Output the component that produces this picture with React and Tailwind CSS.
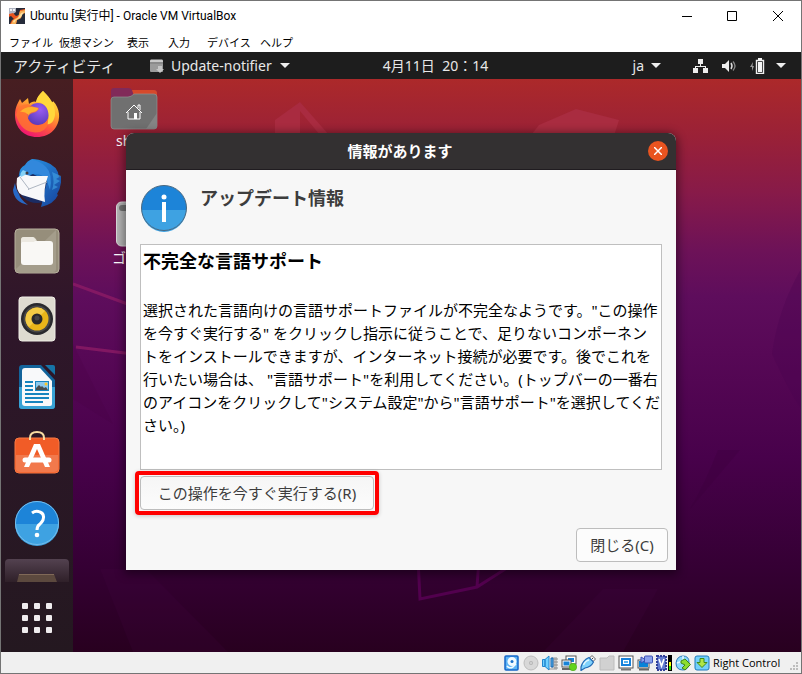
import React from 'react';

const MENU = [
  ['ファイル', 'w-[50px]'],
  ['仮想マシン', 'w-[68px]'],
  ['表示', 'w-[41px]'],
  ['入力', 'w-[39px]'],
  ['デバイス', 'w-[53px]'],
  ['ヘルプ', 'w-[40px]'],
];

function VirtualBoxIcon() {
  return (
    <svg width="16" height="16" viewBox="0 0 16 16" aria-hidden="true">
      <rect width="16" height="16" fill="#252b3a" />
      <path d="M0 0H7V4L4 6H0Z" fill="#aeb3c0" />
      <path d="M1 1H3V3H1ZM4 1H6V3H4Z" fill="#f2f2f5" />
      <path d="M0 6L4 5L7 8L10 7L11 2L16 1V5L13 6L12 10L8 12L7 16H1L3 12L5 11L2 8L0 9Z" fill="#e8541d" />
      <path d="M11 3L16 2V5L13 6L12 10L8 12L7 16H2L4 12L9 9Z" fill="#f6ad55" />
      <path d="M4 13L9 10L12 5L15 4L12 9L7 12L5 15Z" fill="#fde0a0" />
    </svg>
  );
}

function TitleBar() {
  return (
    <header className="flex h-[30px] items-center bg-white pl-2">
      <VirtualBoxIcon />
      <h1 className="ml-[5px] flex-1 whitespace-nowrap font-['Roboto','Noto_Sans_CJK_JP',sans-serif] text-[12px] leading-4 text-black">
        Ubuntu [実行中] - Oracle VM VirtualBox
      </h1>
      <button type="button" aria-label="最小化" className="flex h-[30px] w-[45px] items-center justify-center">
        <svg width="10" height="10" viewBox="0 0 10 10"><path d="M0 5.5H10" stroke="#000" /></svg>
      </button>
      <button type="button" aria-label="最大化" className="flex h-[30px] w-[45px] items-center justify-center">
        <svg width="10" height="10" viewBox="0 0 10 10"><path d="M.5 .5H9.5V9.5H.5Z" stroke="#000" fill="none" /></svg>
      </button>
      <button type="button" aria-label="閉じる" className="flex h-[30px] w-[47px] items-center justify-center">
        <svg width="10" height="10" viewBox="0 0 10 10"><path d="M0 0L10 10M10 0L0 10" stroke="#000" /></svg>
      </button>
    </header>
  );
}

function MenuBar() {
  return (
    <nav className="flex h-[21px] items-center bg-white pl-2 font-['Noto_Sans_CJK_JP',sans-serif] text-[11px] leading-4 text-black">
      {MENU.map(([label, width]) => (
        <button key={label} type="button" className={'whitespace-nowrap text-left ' + width}>{label}</button>
      ))}
    </nav>
  );
}

function Caret() {
  return <svg width="10" height="5" viewBox="0 0 10 5"><path d="M0 0H10L5 5Z" fill="#eee" /></svg>;
}

function TopBar() {
  return (
    <div className="flex h-[27px] items-center bg-[#1d1d1d] text-[15px] leading-5 text-[#e8e8e8]">
      <div className="flex flex-1 basis-0 items-center whitespace-nowrap pl-3">
        <button type="button" className="w-[105px] text-left">アクティビティ</button>
        <button type="button" className="ml-[31px] flex items-center text-[14px]">
          <svg width="16" height="14" viewBox="0 0 16 14" className="mr-[6px]">
            <path d="M1 2Q1 .5 2 .5H13Q14 .5 14 2V4H1Z" fill="#c9c9c9" />
            <path d="M1 3H14V12Q14 13 13 13H2Q1 13 1 12Z" fill="#9b9b9b" />
            <path d="M1 3H14V5H1Z" fill="#8a8a8a" />
            <path d="M9 7H13V10H15L11 14L7 10H9Z" fill="#c6c6c6" />
          </svg>
          <span className="mr-[8px]">Update-notifier</span>
          <Caret />
        </button>
      </div>
      <button type="button" className="whitespace-nowrap pl-[72px] text-[14px]">4月11日&nbsp; 20：14</button>
      <div className="flex flex-1 basis-0 items-center justify-end pr-[15px] text-[14px]">
        <button type="button" className="mr-8 flex items-center gap-[7px]">ja<Caret /></button>
        <button type="button" aria-label="システムメニュー" className="flex items-center">
          <svg width="16" height="14" viewBox="0 0 16 14" className="mr-[13px]">
            <path d="M5 0H10V5H8V7H13V9H15V14H10V9H12V8H3V9H5V14H0V9H2V7H7V5H5Z" fill="#eee" />
          </svg>
          <svg width="16" height="14" viewBox="0 0 16 14" className="mr-[12px]">
            <path d="M0 5H3L7 1V13L3 9H0Z" fill="#eee" />
            <path d="M9 4Q11 7 9 10" stroke="#ddd" strokeWidth="1.5" fill="none" />
            <path d="M11 2.500Q15 7 11 11.500" stroke="#888" strokeWidth="1.300" fill="none" />
          </svg>
          <svg width="15" height="16" viewBox="0 0 15 16" className="mr-[11px]">
            <path d="M3 4L0 9H2V13L4 8H2.500Z" fill="#999" />
            <path d="M6.500 2.500H13.500V15.500H6.500Z" fill="none" stroke="#eee" strokeWidth="1.400" />
            <path d="M8 0H12V2H8ZM8 4H12V14H8Z" fill="#f4f4f4" />
          </svg>
          <Caret />
        </button>
      </div>
    </div>
  );
}

function Firefox() {
  return (
    <svg width="48" height="48" viewBox="0 1 48 48">
      <defs>
        <linearGradient id="ff" x1=".8" y1="0" x2=".3" y2="1">
          <stop offset="0" stopColor="#fff14f" /><stop offset=".35" stopColor="#ffb02e" />
          <stop offset=".65" stopColor="#ff5a3c" /><stop offset="1" stopColor="#ee1274" />
        </linearGradient>
        <radialGradient id="ffp" cx=".6" cy=".3" r=".8">
          <stop offset="0" stopColor="#9a5cf2" /><stop offset="1" stopColor="#5137b4" />
        </radialGradient>
      </defs>
      <path d="M30 1C34 5 37 8 38 12C40 13 40 11 40 11C47 18 48 29 43 37C38 45 30 47 24 47C11 47 2 38 2 25C2 17 5 13 7 9L9 13L15 8L16 14C18 12 21 11 23 12C24 7 27 4 30 1Z" fill="url(#ff)" />
      <circle cx="25" cy="24" r="11" fill="url(#ffp)" />
      <path d="M30 1C34 6 43 12 42 25C41 33 36 35 34 34C37 27 36 18 30 14C27 12 25 12 23 12C24 7 27 4 30 1Z" fill="#ffd83c" />
      <path d="M3 25Q5 14 15 14Q20 17 26 18Q25 22 20 23Q15 24 15 29Q18 36 26 35Q33 34 35 29Q36 39 27 42Q9 45 3 25Z" fill="#ff752f" fillOpacity=".8" />
      <path d="M7 22Q13 15 25 18Q25 21 20 22Q16 23 16 25Q11 21 7 22Z" fill="#ffb02d" />
    </svg>
  );
}

function Thunderbird() {
  return (
    <svg width="48" height="48" viewBox="0 0 48 48">
      <defs>
        <linearGradient id="tb" x1="0" y1="0" x2="1" y2="1">
          <stop offset="0" stopColor="#2a9bea" /><stop offset="1" stopColor="#16419b" />
        </linearGradient>
      </defs>
      <circle cx="24" cy="24" r="20" fill="#1b2c63" />
      <path d="M0 31L2 24Q3 31 6 35Q7 40 15 46Q1 43 0 31Z" fill="#2768c5" />
      <path d="M19 0Q14 2 12 6Q4 10 7 21L20 15L34 22L29 44L28 48Q41 45 45 36L44 35Q49 27 48 17L46 18Q45 7 33 3Q25 0 19 0Z" fill="url(#tb)" />
      <path d="M18 1Q26 1 33 8Q40 15 37 31L34 22Q29 13 18 15L9 18Q8 8 18 1Z" fill="#3288dc" />
      <path d="M4 19L10 15L18 17L35 17Q30 30 32 43L9 36Q2 33 4 19Z" fill="#f8f8fa" />
      <path d="M7 18L16 30L34 23M16 30L15 31" fill="none" stroke="#adb5c1" strokeWidth="1" />
      <path d="M10 11L14 13L12 16L8 18Q6 15 10 11Z" fill="#86d2f6" />
      <circle cx="14" cy="14" r="1.500" fill="#423b40" />
      <path d="M39 13L48 17L43 20L47 22L41 26L45 28L39 31Q42 23 39 13Z" fill="#42a5e6" fillOpacity=".6" />
    </svg>
  );
}

function Files() {
  return (
    <svg width="48" height="48" viewBox="0 0 48 48">
      <rect x="2" y="2" width="44" height="44" rx="4" fill="#968e7b" stroke="#b7b09e" />
      <path d="M3 42L43 3V42Q43 45 40 45H6Q3 45 3 42Z" fill="#a49d8b" />
      <path d="M8 13Q8 10 11 10H20Q22 10 24 14H34V22H8Z" fill="#ddd8cd" />
      <rect x="8" y="14" width="32" height="24" rx="3" fill="#f9f8f5" />
      <path d="M8 13Q8 10 11 10H20L23 13L21 15H8Z" fill="#ece9e1" />
    </svg>
  );
}

function Rhythmbox() {
  return (
    <svg width="48" height="48" viewBox="0 0 48 48">
      <rect x="6" y="2" width="36" height="44" rx="3" fill="#dedbd0" stroke="#efede6" />
      <circle cx="24" cy="24" r="16" fill="#29292d" />
      <circle cx="24" cy="24" r="13.500" fill="#484849" />
      <circle cx="24" cy="24" r="11.500" fill="#e9b519" />
      <path d="M12.500 24A11.500 11.500 0 0 1 32 16L16 32A11 11 0 0 1 12.500 24Z" fill="#f4cc45" />
      <circle cx="24" cy="24" r="5.500" fill="#29292b" />
      <circle cx="24" cy="23" r="2.500" fill="#454547" />
    </svg>
  );
}

function Writer() {
  return (
    <svg width="48" height="48" viewBox="0 0 48 48">
      <path d="M9 2H28L42 17V43Q42 46 39 46H9Q6 46 6 43V5Q6 2 9 2Z" fill="#13649b" />
      <path d="M6 24H42V43Q42 46 39 46H9Q6 46 6 43Z" fill="#37a2d5" />
      <path d="M32 2H40Q42 2 42 4V12Z" fill="#1674a7" />
      <path d="M12 5H27L39 18V41Q39 43 37 43H12Q9 43 9 40V8Q9 5 12 5Z" fill="#f8f9fa" />
      <path d="M12 19H20M12 23H20M12 27H20M12 31H36M12 35H36M12 39H30" stroke="#1685bf" strokeWidth="2" />
      <rect x="22" y="18" width="14" height="10" fill="#1685bf" />
      <rect x="23" y="19" width="12" height="8" fill="#8cc8ed" />
      <circle cx="33" cy="21" r="1.500" fill="#fbc624" />
      <path d="M23 27V25L26 22L28 24L29 23L31 25L33 24L35 27Z" fill="#484c4d" />
    </svg>
  );
}

function Software() {
  return (
    <svg width="48" height="48" viewBox="0 0 48 48">
      <rect x="2" y="7" width="44" height="35" rx="4" fill="#f15c27" stroke="#f87944" />
      <path d="M3 24H45V38Q45 41 41 41H7Q3 41 3 38Z" fill="#f2794c" />
      <path d="M17 9V7Q17 1 24 1T31 7V9" fill="none" stroke="#f9dca2" strokeWidth="2" />
      <path d="M21 13H27L37 36H32L24 18L16 36H11Z" fill="#fff" />
      <path d="M12 29H36" stroke="#fff" strokeWidth="5" strokeLinecap="round" />
    </svg>
  );
}

function Help() {
  return (
    <svg width="48" height="48" viewBox="0 0 48 48">
      <circle cx="24" cy="24" r="22" fill="#1d84d8" />
      <path d="M2 25H46A22 22 0 0 1 2 25Z" fill="#3ea2e2" />
      <circle cx="24" cy="24" r="21.500" fill="none" stroke="#75bdeb" strokeWidth="1" />
      <path d="M19 14Q23 11 27 13Q32 15 30 21Q29 23 27 25Q24 27 24 31" fill="none" stroke="#fff" strokeWidth="3" />
      <circle cx="24" cy="36" r="2.300" fill="#fff" />
    </svg>
  );
}

function Dock() {
  const apps = [
    ['Firefox', Firefox], ['Thunderbird', Thunderbird], ['ファイル', Files], ['Rhythmbox', Rhythmbox],
    ['LibreOffice Writer', Writer], ['Ubuntu Software', Software], ['ヘルプ', Help],
  ];
  return (
    <aside className="flex w-[72px] shrink-0 flex-col items-center bg-linear-to-b from-[#471e21] via-[#2f162a] via-40% to-[#241820] pt-3">
      <div className="flex flex-col gap-5">
        {apps.map(([name, Icon]) => (
          <button key={name} type="button" aria-label={name} className="block size-12"><Icon /></button>
        ))}
      </div>
      <button type="button" aria-label="更新" className="mt-3 flex h-[23px] w-16 items-end justify-center overflow-hidden rounded-t bg-linear-to-b from-[#534250] to-[#2f2029]">
        <svg width="40" height="8" viewBox="0 0 40 8"><path d="M2 0H37Q38 3 40 8H0Z" fill="#5c493e" /><path d="M2 .5H37" stroke="#806958" /></svg>
      </button>
      <button type="button" aria-label="アプリケーションを表示する" className="mt-[21px] grid size-[30px] grid-cols-3 gap-[6px]">
        {Array.from({ length: 9 }, (_, i) => <span key={i} className="size-[6px] rounded-[1px] bg-[#efecee]" />)}
      </button>
    </aside>
  );
}

function Wallpaper() {
  return (
    <svg className="absolute inset-0 h-full w-full" viewBox="0 0 728 573" preserveAspectRatio="none" aria-hidden="true">
      <defs>
        <linearGradient id="sky" x1="0" y1="0" x2="0" y2="1">
          <stop offset="0" stopColor="#ac292a" />
          <stop offset=".1" stopColor="#9a2137" />
          <stop offset=".2" stopColor="#871a49" />
          <stop offset=".3" stopColor="#6d1258" />
          <stop offset=".38" stopColor="#5e0d5c" />
          <stop offset=".48" stopColor="#570856" />
          <stop offset=".66" stopColor="#48014b" />
          <stop offset=".85" stopColor="#350034" />
          <stop offset="1" stopColor="#28001f" />
        </linearGradient>
      </defs>
      <rect width="728" height="573" fill="url(#sky)" />
      <path d="M202 41L227 23V60H202Z" fill="#a92b40" />
      <path d="M227 23L256 56H247L227 32Z" fill="#a92b40" />
      <path d="M455 60L466 46L503 30L546 41L540 60Z" fill="#a92c40" />
      <path d="M0 205L60 227M3 268L60 275" stroke="#8c1c65" strokeWidth="3" strokeOpacity=".8" />
      <path d="M728 190Q705 230 699 275Q715 310 728 330Z" fill="#4a0450" fillOpacity=".3" />
      <path d="M645 371H667L617 430Q632 405 645 371Z" fill="#390039" fillOpacity=".25" />
      <path d="M0 265L40 345L0 320Z" fill="#40003f" fillOpacity=".15" />
      <path d="M27 490H73L155 573H60Z" fill="#49084a" fillOpacity=".15" />
      <path d="M530 510H585L550 573H470Z" fill="#49084a" fillOpacity=".15" />
      <path d="M345 480L347 520L404 508L445 482M406 480L404 508" fill="none" stroke="#52004e" strokeWidth="3" />
    </svg>
  );
}

function DesktopIcons() {
  return (
    <>
      <a href="#home" aria-label="ホーム" className="absolute left-[31px] top-2 w-[60px] text-[14px] leading-5 text-white">
        <svg width="60" height="44" viewBox="0 0 60 44">
          <path d="M7 4Q7 1 10 1H24Q27 1 28 3H50Q53 3 53 6V18H7Z" fill="#812a59" />
          <path d="M28 3H50Q53 3 53 6V15H32Z" fill="#d6492b" />
          <path d="M7 13Q7 10 10 10H24Q27 10 30 7H50Q53 7 53 10V39Q53 42 50 42H10Q7 42 7 39Z" fill="#707070" stroke="#919191" strokeWidth=".7" />
          <path d="M53 26V39Q53 42 50 42H42Z" fill="#848484" />
          <path d="M22 26L30 18L38 26M24 25V32H36V25M34 21V18H36V23" fill="none" stroke="#fff" />
          <path d="M30 26H33V32H30Z" fill="#fff" />
        </svg>
        <span className="ml-3 block">sh</span>
      </a>
      <a href="#trash" aria-label="ゴミ箱" className="absolute left-[39px] top-[122px] w-[60px] text-[14px] leading-5 text-white">
        <svg width="46" height="47" viewBox="0 0 46 47" className="ml-1">
          <rect x=".5" y="1" width="44" height="44" rx="5" fill="#b6b6b6" stroke="#d8d8d8" />
          <rect x="3" y="4" width="39" height="6" rx="3" fill="#747474" />
        </svg>
        <span className="block">ゴ</span>
      </a>
    </>
  );
}

function Dialog() {
  return (
    <section role="dialog" aria-labelledby="dlg-title" className="absolute left-[53px] top-[54px] w-[550px] overflow-visible rounded-t-lg bg-[#f7f7f7] shadow-[0_2px_10px_2px_rgba(0,0,0,0.45)]">
      <header className="flex h-[37px] items-center rounded-t-lg border-b border-[#201c20] bg-[#333031] pl-[26px] pr-2">
        <h2 id="dlg-title" className="flex-1 text-center text-[15px] font-bold leading-5 text-white">情報があります</h2>
        <button type="button" aria-label="閉じる" className="flex size-5 items-center justify-center rounded-full bg-[#e95420]">
          <svg width="8" height="8" viewBox="0 0 8 8"><path d="M0 0L8 8M8 0L0 8" stroke="#fff" strokeWidth="1.500" /></svg>
        </button>
      </header>
      <div className="px-[14px] pb-2 pt-[14px]">
        <div className="flex gap-3">
          <svg width="48" height="48" viewBox="0 0 48 48">
            <circle cx="24" cy="24" r="22.500" fill="#1d84d8" />
            <path d="M2 26H46A22 22 0 0 1 2 26Z" fill="#3ea2e2" />
            <circle cx="24" cy="24" r="22.500" fill="none" stroke="#4a6880" strokeWidth="1" />
            <circle cx="24" cy="13" r="2.500" fill="#fff" />
            <path d="M24 18V38" stroke="#fff" strokeWidth="4" />
          </svg>
          <h3 className="text-[18px] font-bold leading-7 text-[#3d3d3d]">アップデート情報</h3>
        </div>
        <div className="mt-3 h-[226px] w-[522px] border border-[#bfbfbf] bg-white pl-[2px] pt-[2px] text-black">
          <h4 className="text-[18px] font-bold leading-7">不完全な言語サポート</h4>
          <p className="mt-6 whitespace-nowrap text-[15px] leading-[23px]">
            選択された言語向けの言語サポートファイルが不完全なようです。"この操作<br />
            を今すぐ実行する" をクリックし指示に従うことで、足りないコンポーネン<br />
            トをインストールできますが、インターネット接続が必要です。後でこれを<br />
            行いたい場合は、 "言語サポート"を利用してください。(トップバーの一番右<br />
            のアイコンをクリックして"システム設定"から"言語サポート"を選択してくだ<br />
            さい。)
          </p>
        </div>
        <div className="relative mt-[6px] w-[234px]">
          <button type="button" className="block h-[34px] w-full whitespace-nowrap rounded border border-[#bdbdbd] bg-linear-to-b from-[#f6f6f6] to-[#fcfcfc] text-[15px] leading-5 text-[#3d3d3d]">この操作を今すぐ実行する(R)</button>
          <span aria-hidden="true" className="pointer-events-none absolute -inset-[5px] rounded border-4 border-[#ff0000] shadow-[0_1px_4px_rgba(0,0,0,0.2)]" />
        </div>
        <div className="-mr-[6px] mt-[18px] flex justify-end">
          <button type="button" className="h-[34px] w-[92px] whitespace-nowrap rounded border border-[#bdbdbd] bg-[#fcfcfc] text-[15px] leading-5 text-[#3d3d3d]">閉じる(C)</button>
        </div>
      </div>
    </section>
  );
}

const B = '#1c71c9';
const STATUS = [
  ['ハードディスク', <><rect x="1" y="1" width="13" height="14" rx="1" fill="#5db4f5" stroke="#1565c8" strokeWidth="1.500" /><circle cx="8" cy="6.500" r="4.500" fill="#f2faff" /><circle cx="8" cy="6.500" r="1.500" fill={B} /><path d="M3 11Q5 14 9 12L12 9" fill="none" stroke="#f2faff" strokeWidth="1.500" /></>],
  ['光学ドライブ', <><circle cx="8" cy="8" r="7" fill="#d8d8d8" stroke="#bdbdbd" /><circle cx="8" cy="8" r="2" fill="#b5b5b5" /><circle cx="8" cy="8" r=".8" fill="#eee" /></>],
  ['オーディオ', <><path d="M10 2H15V15H7V13H10Z" fill="#c2c2c2" /><path d="M12 4H16M12 7H16M12 10H16M12 13H16" stroke="#8c8c8c" /><path d="M.5 4.500H3V11.500H.5ZM3 4.500L7 1V15L3 11.500Z" fill="#70d0ff" stroke="#2185cf" /><path d="M9 3H11V12H9Z" fill="#58b4ee" stroke="#1565b0" /></>],
  ['ネットワーク', <><rect x="5" y="1" width="10" height="8" fill="#fff" stroke="#555" /><path d="M7 3H13V7H7Z" fill="#1683d8" /><rect x="1" y="5" width="9" height="7" fill="#fff" stroke="#555" /><path d="M2.500 6.500H8.500V10.500H2.500Z" fill="#1683d8" /><path d="M1 14H10" stroke="#666" strokeWidth="2" /><circle cx="12" cy="12" r="3.700" fill="#62d31c" stroke="#48a216" strokeWidth=".6" /></>],
  ['USB', <><path d="M9.500 3L12 .5L15.500 4L13 6.500Z" fill="#f6f6f6" stroke="#666" /><path d="M9 2.500L13.500 7Q11 12 5 13L1 15.500L1 12Q3 5 9 2.500Z" fill="#80d2fc" stroke="#236bb5" strokeWidth="1.200" /><path d="M3.500 10Q5 6 9 5" stroke="#e2f7ff" strokeWidth="1.500" fill="none" /><path d="M12 3H13V4H12Z" fill="#444" /></>],
  ['共有フォルダー', <path d="M1 3H8L10 1H15V15H1Z" fill="#d1d1d1" stroke="#bcbcbc" />],
  ['ディスプレイ', <><rect x="1" y="1" width="14" height="12" fill="#fff" stroke="#555" /><rect x="3" y="3" width="10" height="8" fill="#1782dc" /><rect x="5.500" y="5.500" width="5" height="3" fill="#58b4f0" stroke="#fff" /><path d="M3 14.500H13" stroke="#777" strokeWidth="2" /></>],
  ['録画', <><rect x="1" y="5" width="11" height="8" fill="#fff" stroke="#555" /><rect x="2" y="6" width="9" height="6" fill="#0883d8" /><path d="M2 14.500H12" stroke="#666" strokeWidth="2" /><rect x="7.500" y="1" width="8" height="7" rx="1" fill="#8aa1ec" stroke="#3c51b4" /><path d="M4 2L7.500 4V6L4 8Z" fill="#8aa1ec" stroke="#3c51b4" /></>],
  ['CPU', <><path d="M1 1H10V15H1Z" fill="#627bcf" stroke="#313f99" strokeWidth="2" strokeDasharray="2 1" /><path d="M3 4L5.500 11L8 4" fill="none" stroke="#fff" strokeWidth="1.600" /><path d="M12 0H16V16H12Z" fill="#000" /><path d="M13 7H15V11H13Z" fill="#ff0" /><path d="M13 11H15V15H13Z" fill="#25e000" /></>],
  ['マウス統合', <><path d="M1 8Q2 1 8 1Q14 1 14 7Q14 15 8 15Q1 15 1 8Z" fill="#8ad7fc" stroke="#2b79bb" /><path d="M8 1V6L2 8" fill="none" stroke="#e5f7ff" strokeWidth="1.500" /><path d="M6 6L10 4L15.500 9.500L10 15L7 13L10 10L6 8Z" fill="#8bdc30" stroke="#3b831c" /></>],
  ['キーボード', <><rect x="1" y="1" width="14" height="14" rx="2" fill="#74d0fb" stroke="#1e79bc" /><path d="M6 3.500H10V7.500H13L8 12.500L3 7.500H6Z" fill="#b0e647" stroke="#3f8a1c" /></>],
];

function StatusBar() {
  return (
    <footer className="flex h-[21px] items-center justify-end bg-[#f0f0f0]">
      <div className="flex gap-[3px]">
        {STATUS.map(([name, art]) => (
          <button key={name} type="button" aria-label={name} className="size-4">
            <svg width="16" height="16" viewBox="0 0 16 16">{art}</svg>
          </button>
        ))}
      </div>
      <span className="ml-[3px] w-[77px] whitespace-nowrap font-['Open_Sans',sans-serif] text-[11px] leading-4 text-black">Right Control</span>
      <svg width="11" height="11" viewBox="0 0 11 11" className="self-end" aria-hidden="true">
        <path d="M6 0H8V2H6ZM3 3H5V5H3ZM6 3H8V5H6ZM0 6H2V8H0ZM3 6H5V8H3ZM6 6H8V8H6Z" fill="#bdbdbd" />
      </svg>
    </footer>
  );
}

export default function App() {
  return (
    <div className="flex min-h-screen flex-col border border-[#747474] bg-[#f0f0f0] font-['Noto_Sans','Noto_Sans_CJK_JP',sans-serif]">
      <TitleBar />
      <MenuBar />
      <TopBar />
      <div className="flex flex-1">
        <Dock />
        <main className="relative flex-1 overflow-hidden">
          <Wallpaper />
          <DesktopIcons />
          <Dialog />
        </main>
      </div>
      <StatusBar />
    </div>
  );
}
